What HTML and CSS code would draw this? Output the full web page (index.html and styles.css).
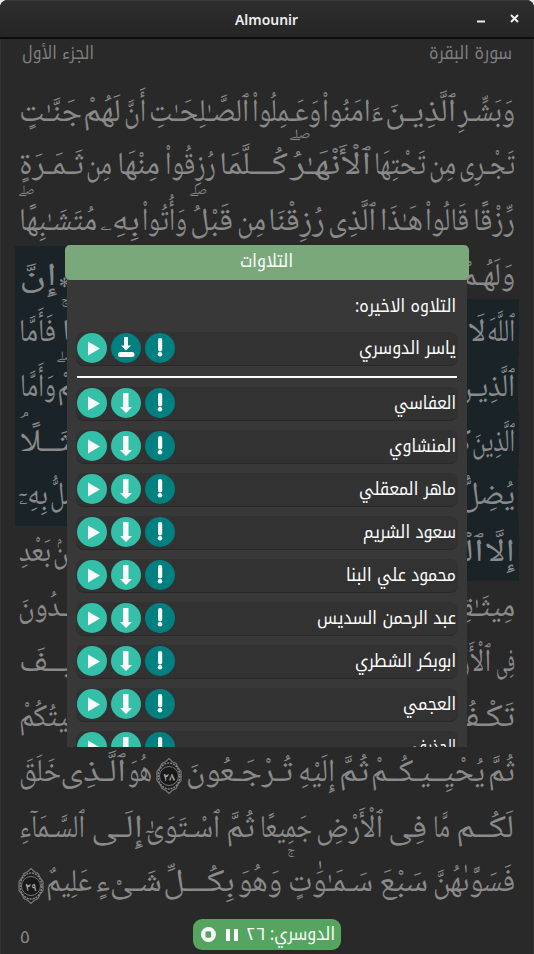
FILE: index.html
```html
<!DOCTYPE html>
<html lang="ar">
<head>
<meta charset="utf-8">
<title>Almounir</title>
<link rel="stylesheet" href="styles.css">
</head>
<body>
<svg class="defs" width="0" height="0">
  <symbol id="play" viewBox="0 0 30 30"><circle cx="15" cy="15" r="15" fill="#33bfa8"/><path d="M11 8.500v14L23 15.500z" fill="#fafafa"/></symbol>
  <symbol id="down" viewBox="0 0 30 30"><circle cx="15" cy="15" r="15" fill="#33bfa8"/><path d="M12 5h5.500v14H21l-6 6-6-6h3z" fill="#fafafa"/></symbol>
  <symbol id="saved" viewBox="0 0 30 30"><circle cx="15" cy="15" r="15" fill="#008080"/><path d="M13 4h4v8.500h3L15 17.500 10 12.500h3z" fill="#fafafa"/><rect x="7" y="19" width="16.500" height="5" rx="2.500" fill="#fafafa"/></symbol>
  <symbol id="info" viewBox="0 0 30 30"><circle cx="15" cy="15" r="15" fill="#008080"/><rect x="13" y="5" width="4.200" height="13.500" rx="2" fill="#fafafa"/><circle cx="15" cy="21.300" r="2.300" fill="#fafafa"/></symbol>
  <symbol id="ayah" viewBox="0 0 26 36"><path d="M13 .5l3 3 4 2 2 4 3 4v9l-3 4-2 4-4 2-3 3-3-3-4-2-2-4-3-4v-9l3-4 2-4 4-2z" fill="#1d1d1d" stroke="#777" stroke-width="1.200"/><ellipse cx="13" cy="18" rx="10.800" ry="13" fill="none" stroke="#858585" stroke-width="1.600" stroke-dasharray="2 1"/><ellipse cx="13" cy="18" rx="9.500" ry="9.500" fill="#191919" stroke="#777"/></symbol>
</svg>
<div class="window">
  <header class="titlebar">
    <span></span>
    <svg class="name" width="64" height="24"><text x="0" y="18" textLength="63" lengthAdjust="spacingAndGlyphs">Almounir</text></svg>
    <svg class="controls" width="50" height="24"><path d="M4 14.500h8" stroke="#eee" stroke-width="2"/><path d="M38 8l7 7M45 8l-7 7" stroke="#eee" stroke-width="2"/></svg>
  </header>
  <main class="page">
    <div class="page-head">
      <svg width="84" height="30"><text x="83" y="20" textLength="83" lengthAdjust="spacingAndGlyphs">سورة البقرة</text></svg>
      <svg width="73" height="30"><text x="73" y="20" textLength="72" lengthAdjust="spacingAndGlyphs">الجزء الأول</text></svg>
    </div>
    <div class="lines">
      <svg class="line" viewBox="15 0 504 55"><text x="515" y="40" textLength="57" lengthAdjust="spacingAndGlyphs">وَبَشِّـرِ</text><text x="456" y="40" textLength="71" lengthAdjust="spacingAndGlyphs">ٱلَّذِيـنَ</text><text x="383" y="40" textLength="61" lengthAdjust="spacingAndGlyphs">ءَامَنُواْ</text><text x="321" y="40" textLength="69" lengthAdjust="spacingAndGlyphs">وَعَـمِلُواْ</text><text x="249" y="40" textLength="100" lengthAdjust="spacingAndGlyphs">ٱلصَّـٰلِحَـٰتِ</text><text x="146" y="40" textLength="22" lengthAdjust="spacingAndGlyphs">أَنَّ</text><text x="121" y="40" textLength="38" lengthAdjust="spacingAndGlyphs">لَهُمْ</text><text x="82" y="40" textLength="63" lengthAdjust="spacingAndGlyphs">جَنَّـٰتٍ</text></svg>
      <svg class="line" viewBox="15 0 504 55"><text x="515" y="38" textLength="56" lengthAdjust="spacingAndGlyphs">تَجْـرِى</text><text x="456" y="38" textLength="27" lengthAdjust="spacingAndGlyphs">مِن</text><text x="426" y="38" textLength="52" lengthAdjust="spacingAndGlyphs">تَحْتِهَا</text><text x="371" y="38" textLength="81" lengthAdjust="spacingAndGlyphs">ٱلْأَنْهَـٰرُۖ</text><text x="288" y="38" textLength="69" lengthAdjust="spacingAndGlyphs">كُـــلَّمَا</text><text x="216" y="38" textLength="51" lengthAdjust="spacingAndGlyphs">رُزِقُواْ</text><text x="160" y="38" textLength="43" lengthAdjust="spacingAndGlyphs">مِنْهَا</text><text x="112" y="38" textLength="26" lengthAdjust="spacingAndGlyphs">مِن</text><text x="84" y="38" textLength="65" lengthAdjust="spacingAndGlyphs">ثَـمَـرَةٍ</text></svg>
      <svg class="line" viewBox="15 0 504 55"><text x="515" y="39" textLength="42" lengthAdjust="spacingAndGlyphs">رِّزْقًا</text><text x="469" y="39" textLength="44" lengthAdjust="spacingAndGlyphs">قَالُواْ</text><text x="423" y="39" textLength="43" lengthAdjust="spacingAndGlyphs">هَـٰذَا</text><text x="376" y="39" textLength="48" lengthAdjust="spacingAndGlyphs">ٱلَّذِى</text><text x="325" y="39" textLength="57" lengthAdjust="spacingAndGlyphs">رُزِقْنَا</text><text x="266" y="39" textLength="29" lengthAdjust="spacingAndGlyphs">مِن</text><text x="233" y="39" textLength="43" lengthAdjust="spacingAndGlyphs">قَبْلُۖ</text><text x="187" y="39" textLength="45" lengthAdjust="spacingAndGlyphs">وَأُتُواْ</text><text x="140" y="39" textLength="40" lengthAdjust="spacingAndGlyphs">بِهِۦ</text><text x="97" y="39" textLength="78" lengthAdjust="spacingAndGlyphs">مُتَشَـٰبِهًاۖ</text></svg>
      <svg class="line" viewBox="15 0 504 55"><rect class="mark" x="15" y="0" width="60" height="56"/><text x="515" y="39" textLength="54" lengthAdjust="spacingAndGlyphs">وَلَهُـمْ</text><text class="star" x="70" y="41">✻</text><text x="57" y="39" textLength="38" lengthAdjust="spacingAndGlyphs">إِنَّ</text></svg>
      <svg class="line" viewBox="15 0 504 55"><rect class="mark" x="15" y="0" width="445" height="56"/><rect class="mark" x="460" y="-2" width="59" height="58"/><text x="515" y="40" textLength="28" lengthAdjust="spacingAndGlyphs">ٱللَّهَ</text><text x="486" y="40" textLength="18" lengthAdjust="spacingAndGlyphs">لَا</text><text x="88" y="40" textLength="26" lengthAdjust="spacingAndGlyphs">هَاۚ</text><text x="56" y="40" textLength="37" lengthAdjust="spacingAndGlyphs">فَأَمَّا</text></svg>
      <svg class="line" viewBox="15 0 504 55"><rect class="mark" x="15" y="0" width="503" height="56"/><text x="515" y="40" textLength="60" lengthAdjust="spacingAndGlyphs">ٱلَّذِيـنَ</text><text x="90" y="40" textLength="33" lengthAdjust="spacingAndGlyphs">هِمْۖ</text><text x="56" y="40" textLength="36" lengthAdjust="spacingAndGlyphs">وَأَمَّا</text></svg>
      <svg class="line" viewBox="15 0 504 55"><rect class="mark" x="15" y="0" width="504" height="56"/><text x="515" y="40" textLength="43" lengthAdjust="spacingAndGlyphs">ٱلَّذِينَ</text><text x="471" y="40" textLength="40" lengthAdjust="spacingAndGlyphs">كَفَرُ</text><text x="88" y="40" textLength="68" lengthAdjust="spacingAndGlyphs">مَثَــلًاۘ</text></svg>
      <svg class="line" viewBox="15 0 504 55"><rect class="mark" x="15" y="0" width="503" height="60"/><text x="515" y="38" textLength="54" lengthAdjust="spacingAndGlyphs">يُضِلُّ</text><text x="92" y="38" textLength="42" lengthAdjust="spacingAndGlyphs">يُضِلُّ</text><text x="48" y="38" textLength="29" lengthAdjust="spacingAndGlyphs">بِهِۦٓ</text></svg>
      <svg class="line" viewBox="15 0 504 55"><rect class="mark" x="460" y="0" width="59" height="60"/><text x="515" y="40" textLength="30" lengthAdjust="spacingAndGlyphs">إِلَّا</text><text x="484" y="40" textLength="45" lengthAdjust="spacingAndGlyphs">ٱلْفَـٰ</text><text x="80" y="40" textLength="27" lengthAdjust="spacingAndGlyphs">مِنۢ</text><text x="51" y="40" textLength="32" lengthAdjust="spacingAndGlyphs">بَعْدِ</text></svg>
      <svg class="line" viewBox="15 0 504 55"><text x="515" y="40" textLength="75" lengthAdjust="spacingAndGlyphs">مِيثَـٰقِهِۦ</text><text x="106" y="40" textLength="88" lengthAdjust="spacingAndGlyphs">يُفْسِـدُونَ</text></svg>
      <svg class="line" viewBox="15 0 504 55"><text x="515" y="40" textLength="19" lengthAdjust="spacingAndGlyphs">فِى</text><text x="491" y="40" textLength="62" lengthAdjust="spacingAndGlyphs">ٱلْأَرْضِ</text><text x="90" y="40" textLength="71" lengthAdjust="spacingAndGlyphs">كَيْــفَ</text></svg>
      <svg class="line" viewBox="15 0 504 55"><text x="515" y="40" textLength="100" lengthAdjust="spacingAndGlyphs">تَكْـفُرُونَ</text><text x="90" y="40" textLength="71" lengthAdjust="spacingAndGlyphs">يُمِيتُكُمْ</text></svg>
      <svg class="line" viewBox="15 0 504 55"><text x="515" y="40" textLength="27" lengthAdjust="spacingAndGlyphs">ثُمَّ</text><text x="485" y="40" textLength="114" lengthAdjust="spacingAndGlyphs">يُحْيِــيـكُــمْ</text><text x="369" y="40" textLength="30" lengthAdjust="spacingAndGlyphs">ثُمَّ</text><text x="335" y="40" textLength="37" lengthAdjust="spacingAndGlyphs">إِلَيْهِ</text><text x="293" y="40" textLength="107" lengthAdjust="spacingAndGlyphs">تُـرْجَـعُونَ</text><use href="#ayah" x="156" y="17" width="26" height="36"/><text class="num" x="169" y="40">٢٨</text><text x="152" y="40" textLength="24" lengthAdjust="spacingAndGlyphs">هُوَ</text><text x="126" y="40" textLength="66" lengthAdjust="spacingAndGlyphs">ٱلَّـذِى</text><text x="61" y="40" textLength="42" lengthAdjust="spacingAndGlyphs">خَلَقَ</text></svg>
      <svg class="line" viewBox="15 0 504 55"><text x="514" y="41" textLength="58" lengthAdjust="spacingAndGlyphs">لَكُــم</text><text x="450" y="41" textLength="17" lengthAdjust="spacingAndGlyphs">مَّا</text><text x="427" y="41" textLength="39" lengthAdjust="spacingAndGlyphs">فِى</text><text x="383" y="41" textLength="67" lengthAdjust="spacingAndGlyphs">ٱلْأَرْضِ</text><text x="312" y="41" textLength="52" lengthAdjust="spacingAndGlyphs">جَمِيعًا</text><text x="255" y="41" textLength="29" lengthAdjust="spacingAndGlyphs">ثُمَّ</text><text x="220" y="41" textLength="74" lengthAdjust="spacingAndGlyphs">ٱسْـتَوَىٰٓ</text><text x="143" y="41" textLength="52" lengthAdjust="spacingAndGlyphs">إِلَـى</text><text x="85" y="41" textLength="66" lengthAdjust="spacingAndGlyphs">ٱلسَّـمَآءِ</text></svg>
      <svg class="line" viewBox="15 0 504 55"><text x="515" y="40" textLength="82" lengthAdjust="spacingAndGlyphs">فَسَوَّىٰهُنَّ</text><text x="428" y="40" textLength="49" lengthAdjust="spacingAndGlyphs">سَبْعَ</text><text x="373" y="40" textLength="85" lengthAdjust="spacingAndGlyphs">سَـمَـٰوَٰتٍۚ</text><text x="282" y="40" textLength="44" lengthAdjust="spacingAndGlyphs">وَهُوَ</text><text x="235" y="40" textLength="72" lengthAdjust="spacingAndGlyphs">بِكُـــلِّ</text><text x="162" y="40" textLength="67" lengthAdjust="spacingAndGlyphs">شَـىْءٍ</text><text x="92" y="40" textLength="46" lengthAdjust="spacingAndGlyphs">عَلِيمٌ</text><use href="#ayah" x="18" y="17" width="26" height="36"/><text class="num" x="31" y="40">٢٩</text></svg>
    </div>
    <footer class="page-foot">
      <span class="page-no">٥</span>
      <div class="player">
        <svg width="148" height="31"><circle cx="15.500" cy="15.500" r="5.200" fill="none" stroke="#fafafa" stroke-width="4.600"/><path d="M12.300 12.500h6v6h-6z" fill="#55a560"/><path d="M10.500 11h1.800v9h-1.800zM18.300 11h1.800v9h-1.800z" fill="#fafafa"/><path d="M33 10h4v12h-4zM41 10h4v12h-4z" fill="#fafafa"/><text x="142" y="21" textLength="65" lengthAdjust="spacingAndGlyphs">الدوسري:</text><text x="72" y="21" textLength="19" lengthAdjust="spacingAndGlyphs">٢٦</text></svg>
      </div>
    </footer>
  </main>
  <section class="dialog">
    <div class="dialog-head"><svg width="54" height="35"><text x="53" y="22" textLength="53" lengthAdjust="spacingAndGlyphs">التلاوات</text></svg></div>
    <div class="dialog-body">
      <div class="caption"><svg width="102" height="52"><text x="101" y="32" textLength="101" lengthAdjust="spacingAndGlyphs">التلاوه الاخيره:</text></svg></div>
      <div class="row"><svg class="ic"><use href="#play"/></svg><svg class="ic"><use href="#saved"/></svg><svg class="ic"><use href="#info"/></svg><svg class="label"><text x="149" y="20.500" textLength="97" lengthAdjust="spacingAndGlyphs">ياسر الدوسري</text></svg></div>
      <div class="rule"></div>
      <div class="list">
        <div class="row"><svg class="ic"><use href="#play"/></svg><svg class="ic"><use href="#down"/></svg><svg class="ic"><use href="#info"/></svg><svg class="label"><text x="149" y="20.500" textLength="62" lengthAdjust="spacingAndGlyphs">العفاسي</text></svg></div>
        <div class="row"><svg class="ic"><use href="#play"/></svg><svg class="ic"><use href="#down"/></svg><svg class="ic"><use href="#info"/></svg><svg class="label"><text x="149" y="20.500" textLength="67" lengthAdjust="spacingAndGlyphs">المنشاوي</text></svg></div>
        <div class="row"><svg class="ic"><use href="#play"/></svg><svg class="ic"><use href="#down"/></svg><svg class="ic"><use href="#info"/></svg><svg class="label"><text x="149" y="20.500" textLength="97" lengthAdjust="spacingAndGlyphs">ماهر المعقلي</text></svg></div>
        <div class="row"><svg class="ic"><use href="#play"/></svg><svg class="ic"><use href="#down"/></svg><svg class="ic"><use href="#info"/></svg><svg class="label"><text x="149" y="20.500" textLength="93" lengthAdjust="spacingAndGlyphs">سعود الشريم</text></svg></div>
        <div class="row"><svg class="ic"><use href="#play"/></svg><svg class="ic"><use href="#down"/></svg><svg class="ic"><use href="#info"/></svg><svg class="label"><text x="149" y="20.500" textLength="110" lengthAdjust="spacingAndGlyphs">محمود علي البنا</text></svg></div>
        <div class="row"><svg class="ic"><use href="#play"/></svg><svg class="ic"><use href="#down"/></svg><svg class="ic"><use href="#info"/></svg><svg class="label"><text x="149" y="20.500" textLength="139" lengthAdjust="spacingAndGlyphs">عبد الرحمن السديس</text></svg></div>
        <div class="row"><svg class="ic"><use href="#play"/></svg><svg class="ic"><use href="#down"/></svg><svg class="ic"><use href="#info"/></svg><svg class="label"><text x="149" y="20.500" textLength="101" lengthAdjust="spacingAndGlyphs">ابوبكر الشطري</text></svg></div>
        <div class="row"><svg class="ic"><use href="#play"/></svg><svg class="ic"><use href="#down"/></svg><svg class="ic"><use href="#info"/></svg><svg class="label"><text x="149" y="20.500" textLength="53" lengthAdjust="spacingAndGlyphs">العجمي</text></svg></div>
        <div class="row"><svg class="ic"><use href="#play"/></svg><svg class="ic"><use href="#down"/></svg><svg class="ic"><use href="#info"/></svg><svg class="label"><text x="149" y="20.500" textLength="50" lengthAdjust="spacingAndGlyphs">الحذيفي</text></svg></div>
      </div>
    </div>
  </section>
</div>
</body>
</html>
```
FILE: styles.css
```css
* { box-sizing: border-box; }
body { margin: 0; background: #e8e8e8; font-family: "Noto Kufi Arabic", "DejaVu Sans", sans-serif; }
svg { display: block; flex: none; overflow: visible; }
text { direction: rtl; fill: #fff; font-size: 18px; }
.defs { position: absolute; }
.window { position: relative; width: 534px; height: 954px; overflow: hidden; background: #292929; border-radius: 8px 8px 0 0; box-shadow: inset 1px 0 #333, inset -1px 0 #333; }
.titlebar { display: grid; grid-template-columns: 1fr 64px 1fr; align-items: center; height: 39px; padding: 0 15px 0 14px; background: linear-gradient(#2d2d2d, #262626); border-top: 1px solid #393939; border-bottom: 2px solid #0c0c0c; }
.name text { direction: ltr; fill: #eee; font: 600 14px "Noto Sans", "Open Sans", sans-serif; }
.controls { justify-self: end; margin-right: -4px; }
.page-head { display: flex; justify-content: space-between; flex-direction: row-reverse; height: 42px; padding: 0 21px; }
.page-head text { fill: #7f7f7f; }
.lines { display: flex; flex-direction: column; width: 504px; margin-left: 15px; }
.line { width: 504px; height: 55px; }
.line text { fill: #8a8a8a; font-family: "Noto Naskh Arabic", "Noto Sans Arabic", serif; font-size: 32px; }
.line .mark { fill: #1a2428; }
.line .star { font-size: 13px; }
.line .num { fill: #aaa; font-size: 12px; font-weight: bold; text-anchor: middle; }
.page-foot { display: grid; grid-template-columns: 193px 148px 1fr; height: 44px; padding-top: 13px; }
.page-no { padding: 8px 0 0 20px; color: #888; font-size: 17px; line-height: 20px; }
.player { height: 31px; border-radius: 9px; background: #55a560; }
.dialog { position: absolute; top: 245px; left: 65px; width: 404px; height: 502px; overflow: hidden; }
.dialog-head { display: flex; justify-content: center; height: 35px; border-radius: 5px; background: #7aa87a; }
.dialog-body { height: 467px; margin: 0 2px; padding: 0 9px; background: #383838; overflow: hidden; }
.caption { display: flex; justify-content: flex-end; height: 52px; padding-right: 1px; }
.row { display: flex; gap: 4px; height: 34px; padding: 1px; border-radius: 8px; background: #323232; border-bottom: 1px solid #292929; }
.ic { width: 30px; height: 30px; }
.label { width: 150px; height: 32px; margin-left: auto; }
.rule { height: 2px; margin: 10px 1px 9px; background: #fff; }
.list { display: flex; flex-direction: column; gap: 9px; }
```
